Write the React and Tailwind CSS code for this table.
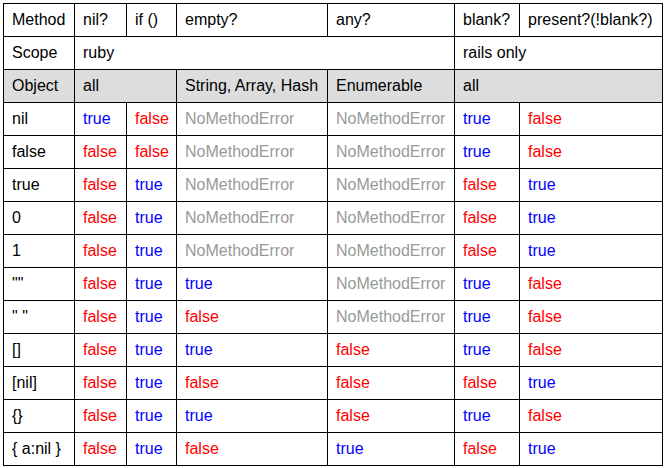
import React from "react";

const T = "text-[#0000ff]";
const F = "text-[#ff0000]";
const N = "text-[#999999]";

const cell = "border border-black h-[33px] p-0 pl-2 align-middle whitespace-nowrap";

const v = (s) => {
  if (s === "true") return <span className={T}>true</span>;
  if (s === "false") return <span className={F}>false</span>;
  if (s === "NoMethodError") return <span className={N}>NoMethodError</span>;
  return s;
};

const rows = [
  ["nil", "true", "false", "NoMethodError", "NoMethodError", "true", "false"],
  ["false", "false", "false", "NoMethodError", "NoMethodError", "true", "false"],
  ["true", "false", "true", "NoMethodError", "NoMethodError", "false", "true"],
  ["0", "false", "true", "NoMethodError", "NoMethodError", "false", "true"],
  ["1", "false", "true", "NoMethodError", "NoMethodError", "false", "true"],
  ['""', "false", "true", "true", "NoMethodError", "true", "false"],
  ['" "', "false", "true", "false", "NoMethodError", "true", "false"],
  ["[]", "false", "true", "true", "false", "true", "false"],
  ["[nil]", "false", "true", "false", "false", "false", "true"],
  ["{}", "false", "true", "true", "false", "true", "false"],
  ["{ a:nil }", "false", "true", "false", "true", "false", "true"],
];

export default function App() {
  return (
    <div className="w-[664px] h-[468px] bg-white pl-[3px] pt-[3px]" style={{ fontFamily: '"Liberation Sans", Arial, sans-serif' }}>
      <table className="border-collapse table-fixed text-[16px] text-black w-[659px]">
        <colgroup>
          <col className="w-[71px]" />
          <col className="w-[52px]" />
          <col className="w-[50px]" />
          <col className="w-[151px]" />
          <col className="w-[127px]" />
          <col className="w-[65px]" />
          <col className="w-[143px]" />
        </colgroup>
        <tbody>
          <tr>
            <td className={cell}>Method</td>
            <td className={cell}>nil?</td>
            <td className={cell}>if ()</td>
            <td className={cell}>empty?</td>
            <td className={cell}>any?</td>
            <td className={cell}>blank?</td>
            <td className={cell}>present?(!blank?)</td>
          </tr>
          <tr>
            <td className={cell}>Scope</td>
            <td className={cell} colSpan={4}>ruby</td>
            <td className={cell} colSpan={2}>rails only</td>
          </tr>
          <tr className="bg-[#dddddd]">
            <td className={cell}>Object</td>
            <td className={cell} colSpan={2}>all</td>
            <td className={cell}>String, Array, Hash</td>
            <td className={cell}>Enumerable</td>
            <td className={cell} colSpan={2}>all</td>
          </tr>
          {rows.map((r, i) => (
            <tr key={i}>
              {r.map((c, j) => (
                <td key={j} className={cell}>{j === 0 ? c : v(c)}</td>
              ))}
            </tr>
          ))}
        </tbody>
      </table>
    </div>
  );
}
